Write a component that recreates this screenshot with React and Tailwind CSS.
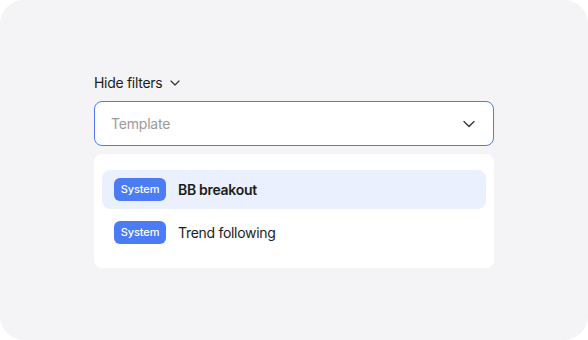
import { ChevronDown } from "lucide-react";

const TEMPLATES = [
  { name: "BB breakout", active: true },
  { name: "Trend following", active: false },
];

const Badge = () => (
  <span className="flex h-[23px] w-[52px] items-center justify-center rounded-md bg-[#4b7bf5] text-[11px] font-medium tracking-[-0.1px] text-white">
    System
  </span>
);

export default function App() {
  return (
    <div
      className="h-[340px] w-[588px] bg-white"
      style={{ fontFamily: "Inter, 'Noto Sans', sans-serif" }}
    >
      <div className="h-full rounded-[24px] bg-[#f4f4f6] pl-[94px] pt-[72px]">
        {/* Toggle */}
        <div className="flex h-5 items-center gap-[5px] text-[14px] tracking-[-0.3px] text-[#1c1c1c]">
          <span>Hide filters</span>
          <ChevronDown size={16} strokeWidth={1.8} className="mt-px text-[#333]" />
        </div>

        {/* Select */}
        <div className="mt-[9px] flex h-[45px] w-[400px] items-center justify-between rounded-lg border border-[#4a7cf0] bg-white pl-4 pr-[14px]">
          <span className="text-[14px] tracking-[-0.2px] text-[#9b9b9b]">Template</span>
          <ChevronDown size={20} strokeWidth={1.5} className="text-[#333]" />
        </div>

        {/* Options */}
        <div className="mt-2 flex w-[400px] flex-col gap-1 rounded-lg bg-white px-2 py-4">
          {TEMPLATES.map((t) => (
            <div
              key={t.name}
              className={
                "flex h-[39px] items-center gap-3 rounded-lg pl-3 " +
                (t.active ? "bg-[#eaf0fd]" : "")
              }
            >
              <Badge />
              <span
                className={
                  "text-[14px] tracking-[-0.3px] text-[#1c1c1c] " +
                  (t.active ? "font-semibold" : "")
                }
              >
                {t.name}
              </span>
            </div>
          ))}
        </div>
      </div>
    </div>
  );
}
